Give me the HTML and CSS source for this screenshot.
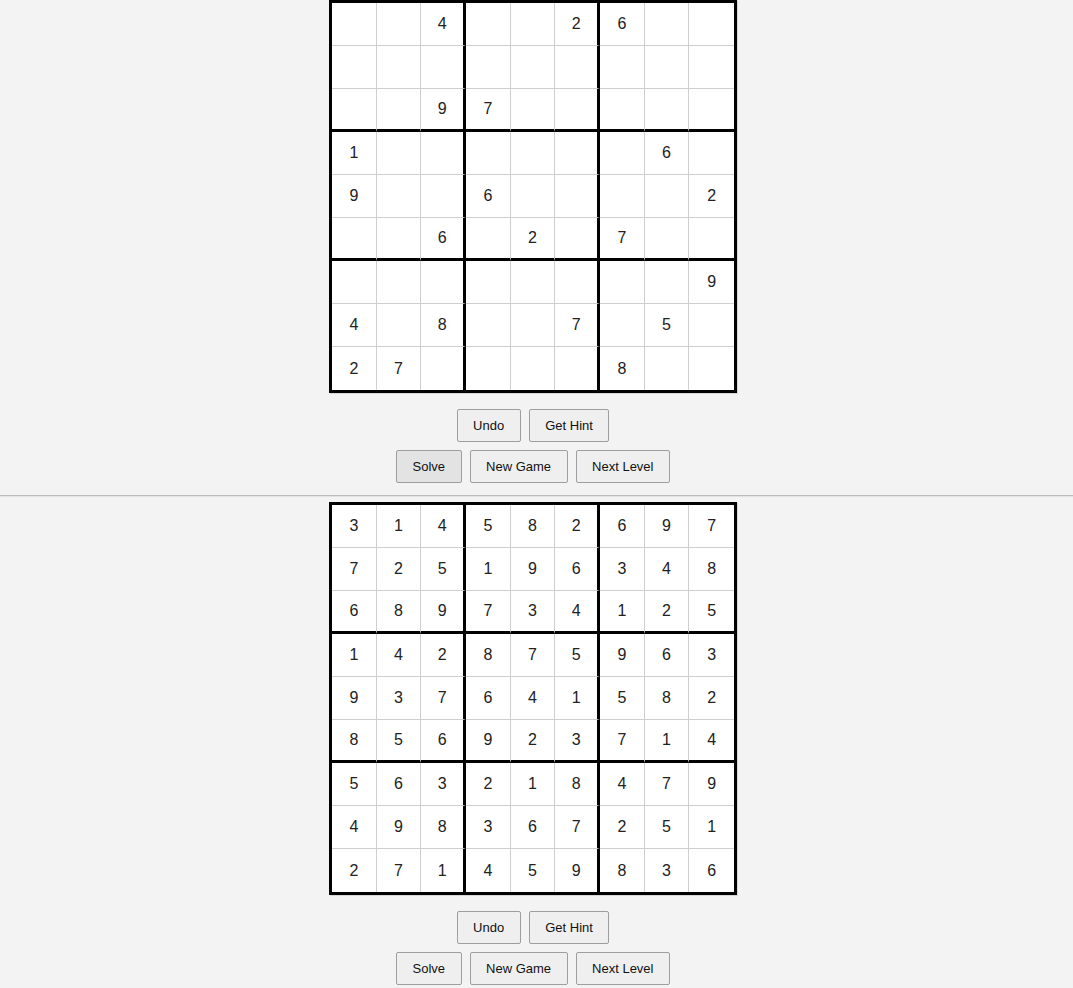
FILE: index.html
```html
<!DOCTYPE html>
<html>
<head>
<meta charset="utf-8">
<link rel="stylesheet" href="styles.css">
</head>
<body>
<section class="game">
  <div class="board">
    <div class="cell"></div><div class="cell"></div><div class="cell">4</div><div class="cell"></div><div class="cell"></div><div class="cell">2</div><div class="cell">6</div><div class="cell"></div><div class="cell"></div>
    <div class="cell"></div><div class="cell"></div><div class="cell"></div><div class="cell"></div><div class="cell"></div><div class="cell"></div><div class="cell"></div><div class="cell"></div><div class="cell"></div>
    <div class="cell"></div><div class="cell"></div><div class="cell">9</div><div class="cell">7</div><div class="cell"></div><div class="cell"></div><div class="cell"></div><div class="cell"></div><div class="cell"></div>
    <div class="cell">1</div><div class="cell"></div><div class="cell"></div><div class="cell"></div><div class="cell"></div><div class="cell"></div><div class="cell"></div><div class="cell">6</div><div class="cell"></div>
    <div class="cell">9</div><div class="cell"></div><div class="cell"></div><div class="cell">6</div><div class="cell"></div><div class="cell"></div><div class="cell"></div><div class="cell"></div><div class="cell">2</div>
    <div class="cell"></div><div class="cell"></div><div class="cell">6</div><div class="cell"></div><div class="cell">2</div><div class="cell"></div><div class="cell">7</div><div class="cell"></div><div class="cell"></div>
    <div class="cell"></div><div class="cell"></div><div class="cell"></div><div class="cell"></div><div class="cell"></div><div class="cell"></div><div class="cell"></div><div class="cell"></div><div class="cell">9</div>
    <div class="cell">4</div><div class="cell"></div><div class="cell">8</div><div class="cell"></div><div class="cell"></div><div class="cell">7</div><div class="cell"></div><div class="cell">5</div><div class="cell"></div>
    <div class="cell">2</div><div class="cell">7</div><div class="cell"></div><div class="cell"></div><div class="cell"></div><div class="cell"></div><div class="cell">8</div><div class="cell"></div><div class="cell"></div>
  </div>
  <div class="controls">
    <div class="btn-row">
      <button class="btn">Undo</button>
      <button class="btn">Get Hint</button>
    </div>
    <div class="btn-row">
      <button class="btn btn-hover">Solve</button>
      <button class="btn">New Game</button>
      <button class="btn">Next Level</button>
    </div>
  </div>
</section>
<hr class="divider">
<section class="game">
  <div class="board">
    <div class="cell">3</div><div class="cell">1</div><div class="cell">4</div><div class="cell">5</div><div class="cell">8</div><div class="cell">2</div><div class="cell">6</div><div class="cell">9</div><div class="cell">7</div>
    <div class="cell">7</div><div class="cell">2</div><div class="cell">5</div><div class="cell">1</div><div class="cell">9</div><div class="cell">6</div><div class="cell">3</div><div class="cell">4</div><div class="cell">8</div>
    <div class="cell">6</div><div class="cell">8</div><div class="cell">9</div><div class="cell">7</div><div class="cell">3</div><div class="cell">4</div><div class="cell">1</div><div class="cell">2</div><div class="cell">5</div>
    <div class="cell">1</div><div class="cell">4</div><div class="cell">2</div><div class="cell">8</div><div class="cell">7</div><div class="cell">5</div><div class="cell">9</div><div class="cell">6</div><div class="cell">3</div>
    <div class="cell">9</div><div class="cell">3</div><div class="cell">7</div><div class="cell">6</div><div class="cell">4</div><div class="cell">1</div><div class="cell">5</div><div class="cell">8</div><div class="cell">2</div>
    <div class="cell">8</div><div class="cell">5</div><div class="cell">6</div><div class="cell">9</div><div class="cell">2</div><div class="cell">3</div><div class="cell">7</div><div class="cell">1</div><div class="cell">4</div>
    <div class="cell">5</div><div class="cell">6</div><div class="cell">3</div><div class="cell">2</div><div class="cell">1</div><div class="cell">8</div><div class="cell">4</div><div class="cell">7</div><div class="cell">9</div>
    <div class="cell">4</div><div class="cell">9</div><div class="cell">8</div><div class="cell">3</div><div class="cell">6</div><div class="cell">7</div><div class="cell">2</div><div class="cell">5</div><div class="cell">1</div>
    <div class="cell">2</div><div class="cell">7</div><div class="cell">1</div><div class="cell">4</div><div class="cell">5</div><div class="cell">9</div><div class="cell">8</div><div class="cell">3</div><div class="cell">6</div>
  </div>
  <div class="controls">
    <div class="btn-row">
      <button class="btn">Undo</button>
      <button class="btn">Get Hint</button>
    </div>
    <div class="btn-row">
      <button class="btn">Solve</button>
      <button class="btn">New Game</button>
      <button class="btn">Next Level</button>
    </div>
  </div>
</section>
</body>
</html>
```

FILE: styles.css
```css
html, body {
  margin: 0;
  padding: 0;
  background: #f3f3f3;
  font-family: "Liberation Sans", Arial, sans-serif;
}

.game {
  display: flex;
  flex-direction: column;
  align-items: center;
  padding-right: 7px;
}

.board {
  display: grid;
  grid-template-columns: repeat(9, 1fr);
  grid-template-rows: repeat(9, 43px);
  width: 402px;
  border: 3px solid #000;
  background: #fff;
  box-shadow: 1px 1px 0 #d6d6d6;
}

.cell {
  box-sizing: border-box;
  display: flex;
  align-items: center;
  justify-content: center;
  border-right: 1px solid #cfcfcf;
  border-bottom: 1px solid #cfcfcf;
  font-size: 16px;
  color: #222;
}

.cell:nth-child(9n+3),
.cell:nth-child(9n+6) {
  border-right: 3px solid #000;
}

.cell:nth-child(9n) {
  border-right: none;
}

.cell:nth-child(n+19):nth-child(-n+27),
.cell:nth-child(n+46):nth-child(-n+54) {
  border-bottom: 3px solid #000;
}

.cell:nth-child(n+73) {
  border-bottom: none;
}

.controls {
  display: flex;
  flex-direction: column;
  align-items: center;
  margin-top: 12px;
}

.btn-row {
  display: flex;
  justify-content: center;
}

.btn {
  margin: 4px;
  height: 33px;
  padding: 0 15.5px;
  font-family: "Liberation Sans", Arial, sans-serif;
  font-size: 13px;
  color: #111;
  background: #efefef;
  border: 1px solid #9e9e9e;
  border-radius: 2px;
}

.btn-hover {
  background: #e3e3e3;
}

.divider {
  margin: 8px 0 5px;
  height: 0;
  border: none;
  border-top: 1px solid #bdbdbd;
  border-bottom: 1px solid #e2e2e2;
}
```
